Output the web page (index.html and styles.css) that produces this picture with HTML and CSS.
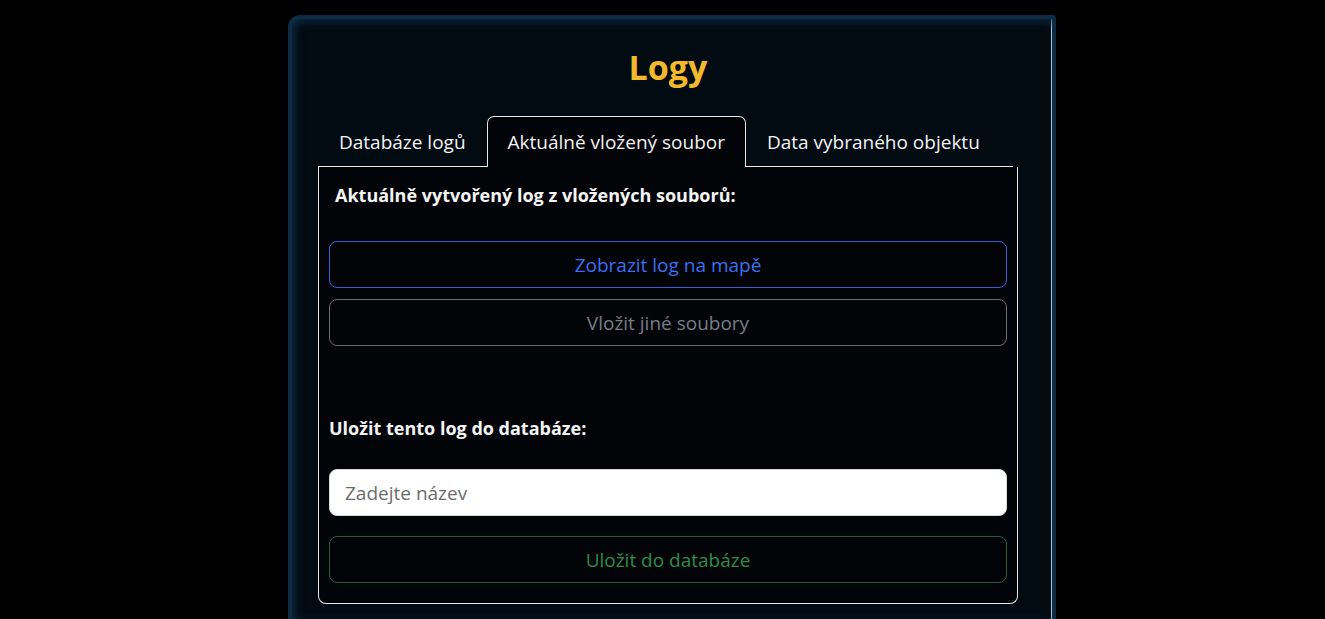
FILE: index.html
```html
<!DOCTYPE html>
<html lang="cs">
<head>
<meta charset="utf-8">
<title>Logy</title>
<link rel="stylesheet" href="styles.css">
</head>
<body>
<div class="panel">
  <div class="column">
    <h1 class="title">Logy</h1>
    <div class="tabs">
      <div class="tab">Databáze logů</div>
      <div class="tab tab-active">Aktuálně vložený soubor</div>
      <div class="tab">Data vybraného objektu</div>
    </div>
    <div class="tab-content">
      <h2 class="subtitle subtitle-indent">Aktuálně vytvořený log z vložených souborů:</h2>
      <div class="btn-group">
        <button class="btn btn-blue">Zobrazit log na mapě</button>
        <button class="btn btn-gray">Vložit jiné soubory</button>
      </div>
      <h2 class="subtitle subtitle-save">Uložit tento log do databáze:</h2>
      <input class="name-input" type="text" placeholder="Zadejte název">
      <button class="btn btn-green">Uložit do databáze</button>
    </div>
  </div>
</div>
</body>
</html>
```

FILE: styles.css
```css
html, body {
  margin: 0;
  padding: 0;
  background: #000;
  overflow: hidden;
  height: 100%;
}

body {
  font-family: "Open Sans", "Noto Sans", sans-serif;
  color: #f2f2f2;
}

.panel {
  margin: 15px 0 0 288px;
  width: 768px;
  height: calc(100% - 15px);
  box-sizing: border-box;
  background: #030b12;
  border-top: 4px solid #0d2b43;
  border-left: 4px solid #0d2b43;
  border-right: 4px solid #0d2b43;
  border-radius: 12px 4px 0 0;
  box-shadow: inset 0 6px 8px -2px rgba(13, 43, 67, 0.7), inset 6px 0 8px -2px rgba(13, 43, 67, 0.7), inset -1px 0 0 #e8eef2;
}

.column {
  width: 700px;
  margin-left: 26px;
  padding-top: 26px;
}

.title {
  margin: 0;
  text-align: center;
  font-size: 34px;
  font-weight: 700;
  line-height: 44px;
  color: #f2b92d;
}

.tabs {
  display: flex;
  margin-top: 27px;
  margin-right: 5px;
  border-bottom: 1px solid #e8e8e8;
  height: 50px;
}

.tab {
  box-sizing: border-box;
  height: 51px;
  padding: 0 20px;
  display: flex;
  align-items: center;
  font-size: 19px;
  color: #f2f2f2;
  border: 1px solid transparent;
  border-bottom: none;
}

.tab-active {
  background: #020408;
  border-color: #e8e8e8;
  border-radius: 7px 7px 0 0;
}

.tab-content {
  box-sizing: border-box;
  background: #020408;
  border: 1px solid #e8e8e8;
  border-top: none;
  border-radius: 0 0 8px 8px;
  padding: 10px 10px 20px 10px;
  height: 437px;
}

.subtitle {
  margin: 0;
  font-size: 18px;
  font-weight: 700;
  line-height: 36px;
  color: #f4f4f4;
}

.subtitle-indent {
  padding-left: 6px;
}

.btn-group {
  display: flex;
  flex-direction: column;
  gap: 11px;
  margin-top: 28px;
}

.btn {
  display: block;
  width: 100%;
  height: 47px;
  box-sizing: border-box;
  background: transparent;
  border: 1px solid;
  border-radius: 8px;
  font-family: inherit;
  font-size: 19px;
}

.btn-blue {
  color: #3d6ff0;
  border-color: #3562d8;
}

.btn-gray {
  color: #767e86;
  border-color: #676d72;
}

.btn-green {
  color: #2f8c4b;
  border-color: #2c5c3a;
  margin-top: 20px;
}

.subtitle-save {
  margin-top: 64px;
}

.name-input {
  display: block;
  width: 100%;
  height: 47px;
  box-sizing: border-box;
  margin-top: 23px;
  border: 1px solid #d8d8d8;
  border-radius: 8px;
  background: #fff;
  padding: 0 15px;
  font-family: inherit;
  font-size: 19px;
  color: #333;
  outline: none;
}

.name-input::placeholder {
  color: #6c6c6c;
}
```
